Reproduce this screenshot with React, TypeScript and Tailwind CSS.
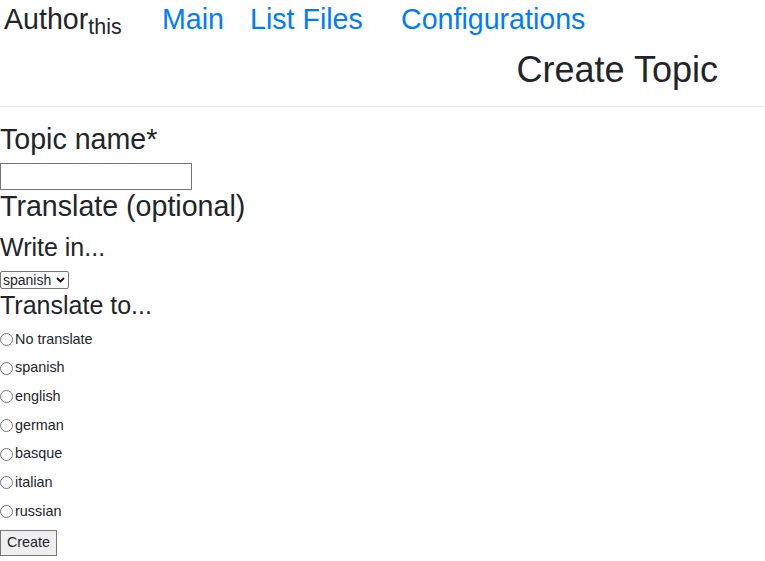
import React from 'react'

const LANGS = ['No translate', 'spanish', 'english', 'german', 'basque', 'italian', 'russian']

export default function App() {
  return (
    <div className="min-h-[561px] bg-white text-[#212529] font-['Liberation_Sans',Arial,sans-serif]">
      {/* Header */}
      <div className="h-[107px] border-b border-[#e5e5e5]">
        <div className="flex pt-[3px] text-[28.6px] leading-[33.6px] whitespace-nowrap">
          <div className="w-[162px] pl-[4px]">
            Author<sub>this</sub>
          </div>
          <a className="w-[88px] text-[#007bff]" href="#">Main</a>
          <a className="w-[151px] text-[#007bff]" href="#">List Files</a>
          <a className="text-[#007bff]" href="#">Configurations</a>
        </div>
        <div className="mt-[12px] pr-[47px] text-right text-[36px] leading-[42px]">Create Topic</div>
      </div>

      {/* Form */}
      <form className="flex flex-col items-start" onSubmit={(e) => e.preventDefault()}>
        <label className="mt-[15.5px] text-[28.6px] leading-[33.6px]">Topic name*</label>
        <input
          type="text"
          className="mt-[7px] h-[27px] w-[192px] border border-[#767676] px-[2px] text-[14px]"
        />
        <div className="text-[28.6px] leading-[33.6px]">Translate (optional)</div>
        <div className="mt-[9.4px] text-[25px] leading-[28.8px]">Write in...</div>
        <div className="relative mt-[9px] h-[18px] w-[69px]">
          <select
            defaultValue="spanish"
            className="block h-[18px] w-[69px] appearance-none border border-[#767676] rounded-[2px] pl-[2px] text-[14px] leading-[16px]"
          >
            {LANGS.slice(1).map((l) => (
              <option key={l} value={l}>{l}</option>
            ))}
          </select>
          <svg
            className="pointer-events-none absolute left-[56px] top-[6px]"
            width="9"
            height="6"
            viewBox="0 0 9 6"
          >
            <path d="M1 1l3.5 3.5L8 1" fill="none" stroke="#111" strokeWidth="1.8" />
          </svg>
        </div>
        <div className="mt-[2.3px] text-[25px] leading-[28.8px]">Translate to...</div>

        <div className="mt-[5.2px] flex flex-col">
          {LANGS.map((l) => (
            <label key={l} className="flex h-[28.67px] items-center text-[14.4px]">
              <input type="radio" name="translate" className="m-0 mr-[2px] h-[13px] w-[13px]" />
              {l}
            </label>
          ))}
        </div>

        <button
          type="submit"
          className="mt-[4px] h-[26.7px] w-[57px] border border-[#767676] bg-[#efefef] text-[14.4px]"
        >
          Create
        </button>
      </form>
    </div>
  )
}
